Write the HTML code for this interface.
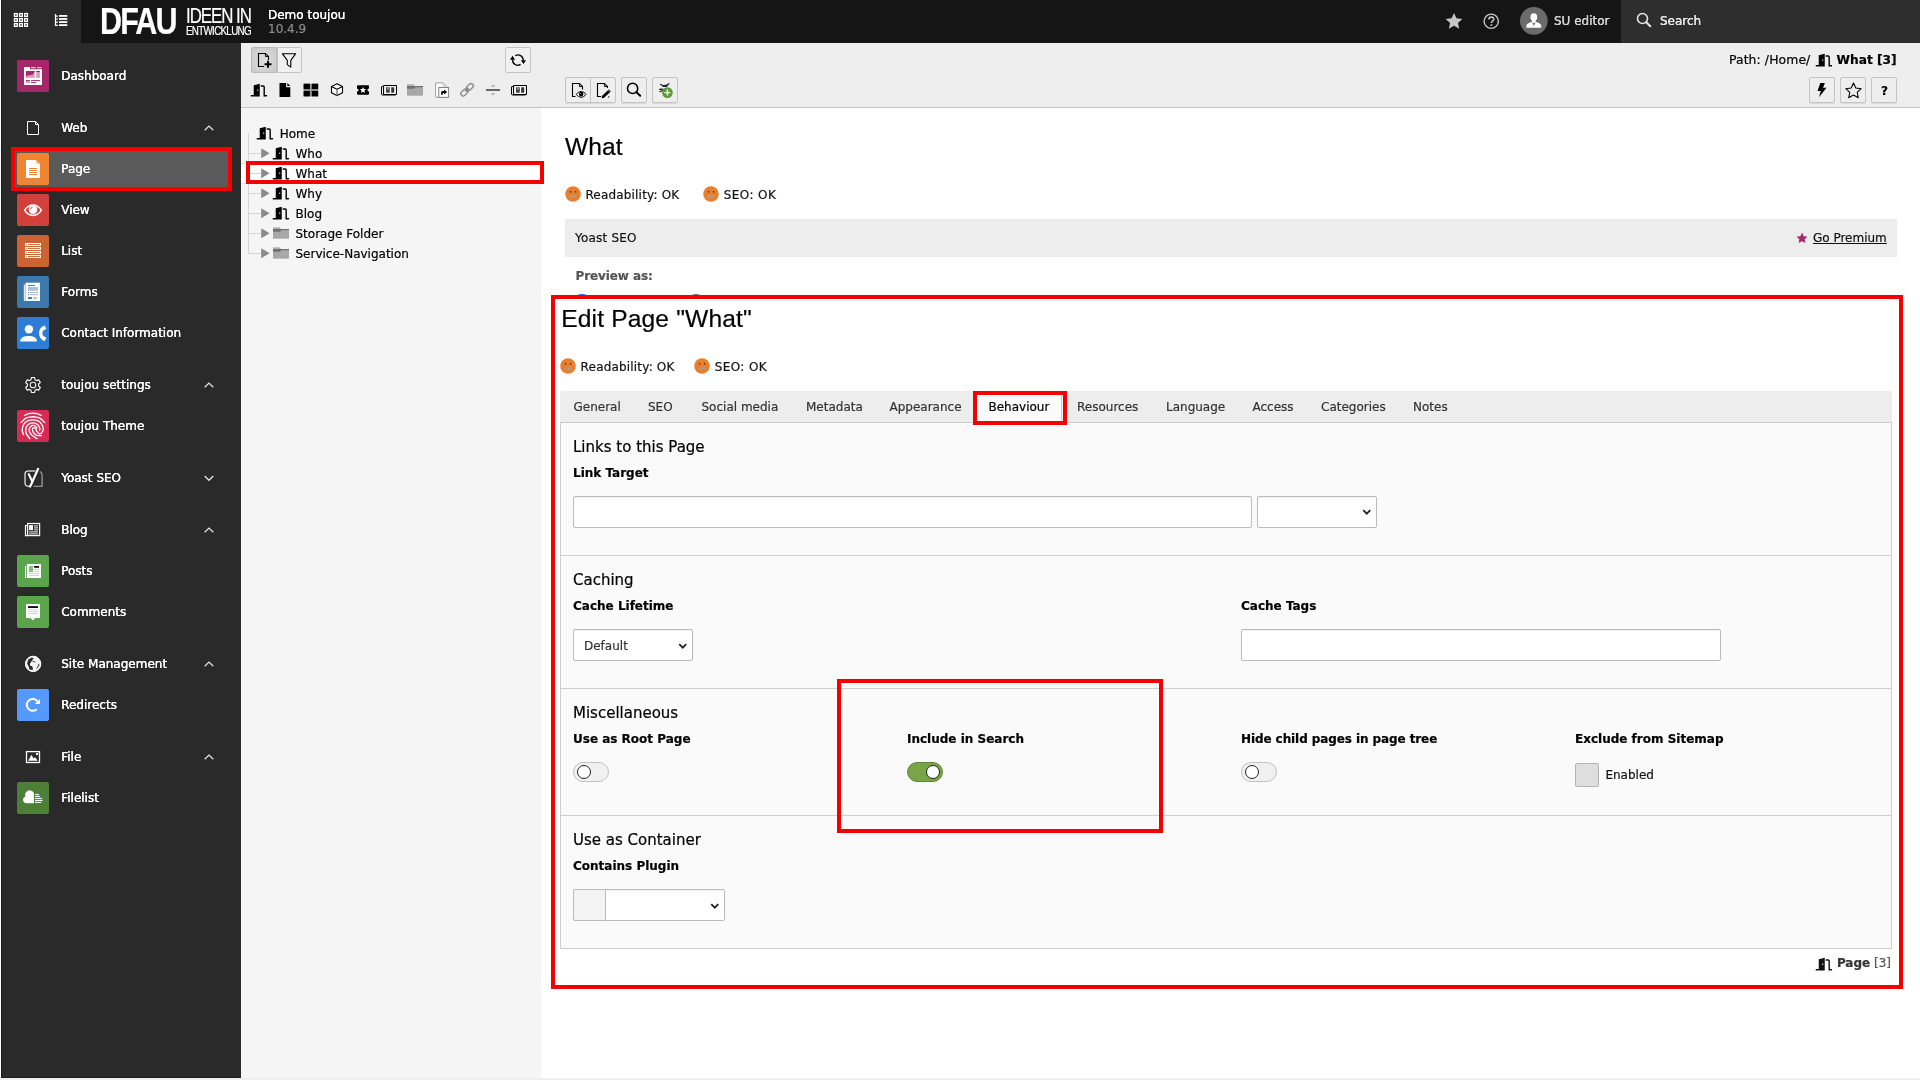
<!DOCTYPE html>
<html lang="en">
<head>
<meta charset="utf-8">
<title>Demo toujou [TYPO3 CMS 10.4.9]</title>
<style>
*{box-sizing:border-box;margin:0;padding:0}
html,body{width:1920px;height:1080px;overflow:hidden;background:#fff}
body{font-family:"DejaVu Sans","Liberation Sans",sans-serif;font-size:12px;color:#000;position:relative}
.t{position:absolute;white-space:nowrap;-webkit-text-stroke:.2px currentColor}
#root{position:absolute;left:0;top:0;width:1920px;height:1080px;will-change:transform}
svg{position:absolute;display:block;overflow:visible}
.mi{position:absolute;width:32px;height:32px;border-radius:2px}
.btn{position:absolute;border:1px solid #c4c4c4;background:#f3f3f3;border-radius:2px}
.red{position:absolute;border:4px solid #f40000}
.inp{position:absolute;border:1px solid #bbb;background:#fff;border-radius:2px;box-shadow:inset 0 1px 1px rgba(0,0,0,.06)}
.sep{position:absolute;left:560px;width:1331px;height:1px;background:#cfcfcf}
</style>
</head>
<body>
<div id="root">

<div style="position:absolute;left:0.00px;top:0.00px;width:1920.00px;height:1080.00px;background:#fff"></div>
<div style="position:absolute;left:1.00px;top:0.00px;width:1919.00px;height:42.60px;background:#151515"></div>
<div style="position:absolute;left:1.00px;top:0.00px;width:80.00px;height:42.60px;background:#2a2a2a"></div>
<div style="position:absolute;left:1620.60px;top:0.00px;width:299.40px;height:42.60px;background:#2e2e2e"></div>
<div style="position:absolute;left:1.00px;top:42.60px;width:240.00px;height:1035.20px;background:#2a2a2a"></div>
<div style="position:absolute;left:1.00px;top:0.00px;width:0.80px;height:1078.00px;background:#1c1c1c"></div>
<div style="position:absolute;left:1.00px;top:1077.00px;width:240.00px;height:1.00px;background:#1c1c1c"></div>
<div style="position:absolute;left:241.00px;top:42.60px;width:300.00px;height:1035.20px;background:#f5f5f5"></div>
<div style="position:absolute;left:241.00px;top:42.60px;width:300.00px;height:65.00px;background:#eee;border-bottom:1px solid #c3c3c3"></div>
<div style="position:absolute;left:541.00px;top:42.60px;width:1379.00px;height:1035.20px;background:#fff"></div>
<div style="position:absolute;left:541.00px;top:42.60px;width:1379.00px;height:65.00px;background:#eee;border-bottom:1px solid #c3c3c3"></div>
<div style="position:absolute;left:0.00px;top:1077.80px;width:1920.00px;height:2.20px;background:#efefef"></div>
<svg style="left:13.00px;top:13.00px" width="16" height="16" viewBox="0 0 16 16" ><rect x="1.50" y="0.60" width="2.700" height="2.700" fill="#000" stroke="#fff" stroke-width="1.400"/><rect x="6.60" y="0.60" width="2.700" height="2.700" fill="#000" stroke="#fff" stroke-width="1.400"/><rect x="11.70" y="0.60" width="2.700" height="2.700" fill="#000" stroke="#fff" stroke-width="1.400"/><rect x="1.50" y="5.60" width="2.700" height="2.700" fill="#000" stroke="#fff" stroke-width="1.400"/><rect x="6.60" y="5.60" width="2.700" height="2.700" fill="#000" stroke="#fff" stroke-width="1.400"/><rect x="11.70" y="5.60" width="2.700" height="2.700" fill="#000" stroke="#fff" stroke-width="1.400"/><rect x="1.50" y="10.60" width="2.700" height="2.700" fill="#000" stroke="#fff" stroke-width="1.400"/><rect x="6.60" y="10.60" width="2.700" height="2.700" fill="#000" stroke="#fff" stroke-width="1.400"/><rect x="11.70" y="10.60" width="2.700" height="2.700" fill="#000" stroke="#fff" stroke-width="1.400"/></svg>
<svg style="left:53.00px;top:13.00px" width="16" height="16" viewBox="0 0 16 16" ><path fill="none" stroke="#fff" stroke-width="1.200" d="M2.500 .9v12M2.500 3.100h2.400M2.500 6h2.400M2.500 9.100h2.400M2.500 12.300h2.400"/><rect x="6" y="2.00" width="8.300" height="1.800" fill="#fff"/><rect x="6" y="5.07" width="8.300" height="1.800" fill="#fff"/><rect x="6" y="8.14" width="8.300" height="1.800" fill="#fff"/><rect x="6" y="11.21" width="8.300" height="1.800" fill="#fff"/></svg>
<div class="t" style="left:100.00px;top:-5.50px;font-size:37.4px;line-height:53px;color:#fff;font-family:'Liberation Sans','DejaVu Sans',sans-serif;font-weight:bold;letter-spacing:-2.3px;transform:scaleX(.816);transform-origin:0 0;">DFAU</div>
<div class="t" style="left:186.00px;top:1.00px;font-size:21.4px;line-height:30px;color:#fff;font-family:'Liberation Sans','DejaVu Sans',sans-serif;letter-spacing:-1.3px;transform:scaleX(.788);transform-origin:0 0;">IDEEN IN</div>
<div class="t" style="left:186.00px;top:22.50px;font-size:11.9px;line-height:17px;color:#fff;font-family:'Liberation Sans','DejaVu Sans',sans-serif;letter-spacing:-.85px;transform:scaleX(.826);transform-origin:0 0;">ENTWICKLUNG</div>
<div class="t" style="left:268.00px;top:6.50px;font-size:12px;line-height:17px;color:#fff;text-shadow:0 0 .4px #fff;">Demo toujou</div>
<div class="t" style="left:268.00px;top:20.50px;font-size:12px;line-height:17px;color:#8c8c8c;">10.4.9</div>
<svg style="left:1444.90px;top:12.10px" width="18.05" height="18.05" viewBox="0 0 16 16" ><path fill="#c4c4c4" d="M8 .8l2.200 4.800 5.200.6-3.900 3.500 1.100 5.100L8 12.200l-4.600 2.600 1.100-5.100L.6 6.200l5.200-.6z"/></svg>
<svg style="left:1482.50px;top:12.50px" width="16.5" height="16.5" viewBox="0 0 16 16" ><circle cx="8" cy="8" r="6.900" fill="none" stroke="#c4c4c4" stroke-width="1.400"/><path fill="none" stroke="#c4c4c4" stroke-width="1.500" d="M5.700 6.300c0-1.400 1-2.300 2.400-2.300s2.300.9 2.300 2.100c0 1.700-2.300 1.700-2.300 3.700"/><rect x="7.300" y="10.900" width="1.600" height="1.600" fill="#c4c4c4"/></svg>
<svg style="left:1520.00px;top:7.30px" width="27.7" height="27.7" viewBox="0 0 28 28" ><circle cx="14" cy="14" r="14" fill="#6b6b6b"/><path fill="#fff" d="M14 6.200c2.300 0 3.400 1.700 3.400 3.900 0 1.600-.6 3-1.500 3.800v1.300c2.900.7 5.600 1.600 5.600 4.400v1.400h-15v-1.400c0-2.800 2.700-3.700 5.600-4.400v-1.300c-.9-.8-1.500-2.200-1.500-3.800 0-2.200 1.100-3.900 3.400-3.900z"/><path fill="#6b6b6b" d="M12.300 15.600l1.700 3.600 1.700-3.600-1.700.6z"/></svg>
<div class="t" style="left:1554.00px;top:12.50px;font-size:12px;line-height:17px;color:#d4d4d4;text-shadow:0 0 .5px #d4d4d4;">SU editor</div>
<svg style="left:1635.90px;top:12.00px" width="16" height="16" viewBox="0 0 16 16" ><circle cx="6.500" cy="6.500" r="5" fill="none" stroke="#e6e6e6" stroke-width="1.600"/><path stroke="#e6e6e6" stroke-width="2" stroke-linecap="round" d="M10.300 10.300l4 4"/></svg>
<div class="t" style="left:1660.00px;top:12.50px;font-size:12px;line-height:17px;color:#e8e8e8;text-shadow:0 0 .5px #e8e8e8;">Search</div>
<div style="position:absolute;left:15.00px;top:151.00px;width:213.00px;height:36.00px;background:#5a5a5a"></div>
<div class="red" style="left:11px;top:147px;width:221px;height:44px"></div>
<div class="mi" style="left:17px;top:60px;background:#a4276a"><svg style="left:0.00px;top:0.00px" width="32" height="32" viewBox="0 0 32 32" ><path fill="#fff" d="M7 7h6v2.2h12V25H7z"/><rect x="14" y="7.2" width="4.6" height="1" fill="#fff"/><rect x="20" y="7.2" width="4.7" height="1" fill="#fff" opacity=".85"/><rect x="9" y="11" width="8.7" height="6.9" fill="#a4276a" opacity=".45"/><path fill="#a4276a" d="M9 11h8.7v.6l-2.2 3.4-1-.6-1.3 1.200-1.400-.9-1.500 1.100-1.300.900z"/><rect x="19.200" y="11" width="3.700" height="6.900" fill="#a4276a" opacity=".45"/><rect x="19.200" y="11" width="3.700" height="1" fill="#a4276a"/><rect x="9" y="20" width="3.700" height="2.900" fill="#a4276a" opacity=".5"/><rect x="9" y="20" width="3.700" height=".9" fill="#a4276a"/><rect x="14" y="20.100" width="9" height="1" fill="#a4276a"/><rect x="14" y="22.100" width="5" height="1" fill="#a4276a"/></svg></div>
<div class="t" style="left:61.20px;top:67.50px;font-size:12px;line-height:17px;color:#fff;text-shadow:0 0 .5px #fff;">Dashboard</div>
<div class="mi" style="left:17px;top:153px;background:#ee8535"><svg style="left:0.00px;top:0.00px" width="32" height="32" viewBox="0 0 32 32" ><path fill="#fff" d="M9 7h10l4 4v14H9z"/><path fill="#ee8535" opacity=".45" d="M19 7l4 4h-4z"/><rect x="12" y="15" width="8" height="1" fill="#ee8535"/><rect x="12" y="17" width="8" height="1" fill="#ee8535"/><rect x="12" y="19" width="8" height="1" fill="#ee8535"/><rect x="12" y="21" width="8" height="1" fill="#ee8535"/></svg></div>
<div class="t" style="left:61.20px;top:160.50px;font-size:12px;line-height:17px;color:#fff;text-shadow:0 0 .5px #fff;">Page</div>
<div class="mi" style="left:17px;top:194px;background:#d2403b"><svg style="left:0.00px;top:0.00px" width="32" height="32" viewBox="0 0 32 32" ><path fill="none" stroke="#fff" stroke-width="1.5" d="M7.600 16.200C10 12.400 13 10.900 16 10.900s6 1.500 8.400 5.300C22 20 19 21.400 16 21.400S10 20 7.600 16.200z"/><circle cx="16" cy="15.600" r="4.300" fill="#fff"/><path fill="none" stroke="#d2403b" stroke-width=".9" d="M13.700 15.200a2.300 2.300 0 0 1 2-2.200"/></svg></div>
<div class="t" style="left:61.20px;top:201.50px;font-size:12px;line-height:17px;color:#fff;text-shadow:0 0 .5px #fff;">View</div>
<div class="mi" style="left:17px;top:235px;background:#cb6432"><svg style="left:0.00px;top:0.00px" width="32" height="32" viewBox="0 0 32 32" ><rect x="8" y="8" width="16" height="2.900" rx=".3" fill="#fff"/><rect x="9" y="9" width="14" height=".9" fill="#cb6432"/><rect x="9.800" y="9" width="1.200" height=".9" fill="#fff"/><rect x="8" y="12" width="16" height="2.900" rx=".3" fill="#fff"/><rect x="9" y="13" width="14" height=".9" fill="#cb6432"/><rect x="9.800" y="13" width="1.200" height=".9" fill="#fff"/><rect x="8" y="16" width="16" height="2.900" rx=".3" fill="#fff"/><rect x="9" y="17" width="14" height=".9" fill="#cb6432"/><rect x="9.800" y="17" width="1.200" height=".9" fill="#fff"/><rect x="8" y="20" width="16" height="2.900" rx=".3" fill="#fff"/><rect x="9" y="21" width="14" height=".9" fill="#cb6432"/><rect x="9.800" y="21" width="1.200" height=".9" fill="#fff"/></svg></div>
<div class="t" style="left:61.20px;top:242.50px;font-size:12px;line-height:17px;color:#fff;text-shadow:0 0 .5px #fff;">List</div>
<div class="mi" style="left:17px;top:276px;background:#3c78ab"><svg style="left:0.00px;top:0.00px" width="32" height="32" viewBox="0 0 32 32" ><path fill="#fff" opacity=".85" d="M6.800 8.700h2v16.300h-2z"/><rect x="8.400" y="6.700" width="14.600" height="18.300" fill="#fff"/><path stroke="#3c78ab" stroke-width=".5" opacity=".6" d="M8.500 8.700v16.300"/><rect x="11" y="9.100" width="7" height="1" fill="#3c78ab"/><rect x="11" y="11.100" width="10" height="3.700" fill="#3c78ab" opacity=".45"/><rect x="11" y="16" width="1.100" height="1" fill="#3c78ab"/><rect x="13" y="16" width="8" height="1" fill="#3c78ab" opacity=".5"/><rect x="11" y="18.200" width="1.100" height="1" fill="#3c78ab"/><rect x="13" y="18.200" width="8" height="1" fill="#3c78ab" opacity=".5"/><rect x="11" y="21.100" width="4" height="1.900" fill="#3c78ab"/><rect x="16.200" y="21.100" width="3.800" height="1.900" fill="#3c78ab" opacity=".45"/></svg></div>
<div class="t" style="left:61.20px;top:283.50px;font-size:12px;line-height:17px;color:#fff;text-shadow:0 0 .5px #fff;">Forms</div>
<div class="mi" style="left:17px;top:317px;background:#2d7dd7"><svg style="left:0.00px;top:0.00px" width="32" height="32" viewBox="0 0 32 32" ><circle cx="11.900" cy="12.300" r="4.200" fill="#fff"/><path fill="#fff" d="M3.200 24.600c0-3.800 3.600-5.600 8.400-5.600s8.400 1.800 8.400 5.600z"/><path fill="#fff" d="M27.800 8.400L29.300 12l-2.700 1.200c-1.700 1.800-1.700 4.200 0 6l2.700 1.200L27.800 24c-3.300-.7-5.700-4-5.700-7.800s2.400-7.100 5.700-7.800z"/></svg></div>
<div class="t" style="left:61.20px;top:324.50px;font-size:12px;line-height:17px;color:#fff;text-shadow:0 0 .5px #fff;">Contact Information</div>
<div class="mi" style="left:17px;top:410px;background:#d62b55"><svg style="left:0.00px;top:0.00px" width="32" height="32" viewBox="0 0 32 32" ><g fill="none" stroke="#fff" stroke-width="1.350" stroke-linecap="round" stroke-linejoin="round"><path d="M7.80 5.40C8.42 5.12 10.15 4.07 11.50 3.70C12.85 3.33 14.43 3.20 15.90 3.20C17.37 3.20 18.93 3.33 20.30 3.70C21.67 4.07 23.47 5.12 24.10 5.40"/><path d="M4.10 12.50C4.92 11.78 7.03 9.17 9.00 8.20C10.97 7.23 13.60 6.70 15.90 6.70C18.20 6.70 20.85 7.23 22.80 8.20C24.75 9.17 26.80 11.78 27.60 12.50"/><path d="M6.50 24.70C6.28 23.87 5.12 21.52 5.20 19.70C5.28 17.88 6.07 15.27 7.00 13.80C7.93 12.33 9.32 11.55 10.80 10.90C12.28 10.25 14.20 9.90 15.90 9.90C17.60 9.90 19.63 10.32 21.00 10.90C22.37 11.48 23.22 12.05 24.10 13.40C24.98 14.75 26.25 17.40 26.30 19.00C26.35 20.60 25.13 22.23 24.40 23.00C23.67 23.77 22.70 23.90 21.90 23.60C21.10 23.30 20.10 21.97 19.60 21.20C19.10 20.43 19.23 19.55 18.90 19.00C18.57 18.45 18.10 18.08 17.60 17.90C17.10 17.72 16.27 17.60 15.90 17.90C15.53 18.20 15.27 18.85 15.40 19.70C15.53 20.55 16.00 22.07 16.70 23.00C17.40 23.93 18.32 24.87 19.60 25.30C20.88 25.73 23.60 25.55 24.40 25.60"/><path d="M12.80 28.60C12.27 27.85 10.28 25.58 9.60 24.10C8.92 22.62 8.52 21.23 8.70 19.70C8.88 18.17 9.50 16.03 10.70 14.90C11.90 13.77 14.17 12.90 15.90 12.90C17.63 12.90 19.92 13.88 21.10 14.90C22.28 15.92 22.78 18.12 23.00 19.00C23.22 19.88 22.50 20.00 22.40 20.20"/><path d="M20.00 28.60C19.20 28.10 16.43 26.72 15.20 25.60C13.97 24.48 13.10 23.00 12.60 21.90C12.10 20.80 12.02 19.92 12.20 19.00C12.38 18.08 13.08 17.00 13.70 16.40C14.32 15.80 15.13 15.47 15.90 15.40C16.67 15.33 17.63 15.57 18.30 16.00C18.97 16.43 19.63 17.67 19.90 18.00"/></g></svg></div>
<div class="t" style="left:61.20px;top:417.50px;font-size:12px;line-height:17px;color:#fff;text-shadow:0 0 .5px #fff;">toujou Theme</div>
<div class="mi" style="left:17px;top:555px;background:#5aa44c"><svg style="left:0.00px;top:0.00px" width="32" height="32" viewBox="0 0 32 32" ><rect x="8" y="11.200" width="1.100" height="11.800" fill="#fff"/><rect x="9.900" y="9" width="14.100" height="14" fill="#fff"/><rect x="12" y="11" width="4" height="6" fill="#5aa44c" opacity=".7"/><rect x="17.100" y="11" width="4.900" height="1.800" fill="#111"/><rect x="17.100" y="14" width="4.900" height=".8" fill="#c8c8c8"/><rect x="17.100" y="16" width="4.900" height=".8" fill="#c8c8c8"/><rect x="12" y="18.100" width="10" height=".8" fill="#c8c8c8"/><rect x="12" y="20.100" width="10" height=".8" fill="#c8c8c8"/></svg></div>
<div class="t" style="left:61.20px;top:562.50px;font-size:12px;line-height:17px;color:#fff;text-shadow:0 0 .5px #fff;">Posts</div>
<div class="mi" style="left:17px;top:596px;background:#5aa44c"><svg style="left:0.00px;top:0.00px" width="32" height="32" viewBox="0 0 32 32" ><path fill="#fff" d="M9 8h14v14h-4.900l-2.250 2.600L13.600 22H9z"/><rect x="11" y="10.100" width="10" height="1.900" fill="#111"/><rect x="11" y="13.300" width="10" height=".8" fill="#c8c8c8"/><rect x="11" y="15.300" width="10" height=".8" fill="#c8c8c8"/><rect x="11" y="17.300" width="10" height=".8" fill="#c8c8c8"/></svg></div>
<div class="t" style="left:61.20px;top:603.50px;font-size:12px;line-height:17px;color:#fff;text-shadow:0 0 .5px #fff;">Comments</div>
<div class="mi" style="left:17px;top:689px;background:#5599fe"><svg style="left:0.00px;top:0.00px" width="32" height="32" viewBox="0 0 32 32" ><path fill="none" stroke="#fff" stroke-width="2" d="M20.400 12.300A5.900 5.900 0 1 0 19.900 20.100"/><path fill="#fff" d="M23 9.900v5h-5.200z"/></svg></div>
<div class="t" style="left:61.20px;top:696.50px;font-size:12px;line-height:17px;color:#fff;text-shadow:0 0 .5px #fff;">Redirects</div>
<div class="mi" style="left:17px;top:782px;background:#4c8038"><svg style="left:0.00px;top:0.00px" width="32" height="32" viewBox="0 0 32 32" ><path fill="#fff" d="M17 21.200H9.300a3.300 3.300 0 0 1-.9-6.450 4.600 4.600 0 0 1 8.600-3.500z"/><rect x="18" y="11.95" width="4.00" height="1.100" fill="#fff"/><rect x="18" y="13.90" width="5.00" height="1.100" fill="#fff"/><rect x="18" y="15.90" width="7.00" height="1.100" fill="#fff"/><rect x="18" y="17.90" width="7.70" height="1.100" fill="#fff"/><rect x="18" y="19.85" width="6.30" height="1.100" fill="#fff"/></svg></div>
<div class="t" style="left:61.20px;top:789.50px;font-size:12px;line-height:17px;color:#fff;text-shadow:0 0 .5px #fff;">Filelist</div>
<svg style="left:25.00px;top:120.00px" width="16" height="16" viewBox="0 0 16 16" ><path fill="none" stroke="#fff" stroke-width="1" d="M2.500 1.500h8l3 3v10h-11z"/><path fill="none" stroke="#fff" stroke-width="1" d="M10.500 1.500v3h3"/></svg>
<div class="t" style="left:61.20px;top:119.50px;font-size:12px;line-height:17px;color:#fff;text-shadow:0 0 .5px #fff;">Web</div>
<svg style="left:204.00px;top:125.40px" width="10" height="6.3" viewBox="0 0 10 6.3" ><path fill="none" stroke="#e8e8e8" stroke-width="1.200" d="M.7 5.300L5 1l4.300 4.300"/></svg>
<svg style="left:25.00px;top:377.00px" width="16" height="16" viewBox="0 0 16 16" ><path fill="none" stroke="#fff" stroke-width="1.100" stroke-linejoin="round" d="M6.39 0.47L9.61 0.47L9.95 2.65L11.66 3.63L13.72 2.84L15.32 5.62L13.61 7.02L13.61 8.98L15.32 10.38L13.72 13.16L11.66 12.37L9.95 13.35L9.61 15.53L6.39 15.53L6.05 13.35L4.34 12.37L2.28 13.16L0.68 10.38L2.39 8.98L2.39 7.02L0.68 5.62L2.28 2.84L4.34 3.63L6.05 2.65z"/><circle cx="8" cy="8" r="2.800" fill="none" stroke="#eee" stroke-width="1.100"/></svg>
<div class="t" style="left:61.20px;top:376.50px;font-size:12px;line-height:17px;color:#fff;text-shadow:0 0 .5px #fff;">toujou settings</div>
<svg style="left:204.00px;top:382.40px" width="10" height="6.3" viewBox="0 0 10 6.3" ><path fill="none" stroke="#e8e8e8" stroke-width="1.200" d="M.7 5.300L5 1l4.300 4.300"/></svg>
<svg style="left:25.00px;top:470.00px" width="18" height="18" viewBox="0 0 18 18" ><path fill="none" stroke="#fff" stroke-width="1.100" d="M10.500 1H3a3 3 0 0 0-3 3v9.200a3 3 0 0 0 3 3h1.500"/><path fill="none" stroke="#b0b0b0" stroke-width="1.100" d="M3.500 1H10M14.800 1.400c1.400.5 2.300 1.800 2.300 3.400v11.400H8.500"/><path fill="none" stroke="#fff" stroke-width="2.100" d="M3.400 3.400l4.200 8.800"/><path fill="none" stroke="#fff" stroke-width="2.300" d="M13.400-1.900L7.300 11.900c-.8 1.900-1.500 3.700-2.900 5.500"/></svg>
<div class="t" style="left:61.20px;top:469.50px;font-size:12px;line-height:17px;color:#fff;text-shadow:0 0 .5px #fff;">Yoast SEO</div>
<svg style="left:204.00px;top:475.40px" width="10" height="6.3" viewBox="0 0 10 6.3" ><path fill="none" stroke="#e8e8e8" stroke-width="1.200" d="M.7 1L5 5.300 9.300 1"/></svg>
<svg style="left:25.00px;top:522.00px" width="16" height="16" viewBox="0 0 16 16" ><rect x="2.600" y="1.500" width="12" height="12.100" fill="none" stroke="#fff" stroke-width="1.200"/><path fill="none" stroke="#fff" stroke-width="1.200" d="M2.600 3.500H.5v10.100h2.100"/><rect x="4.100" y="3.100" width="3.900" height="5" fill="#fff"/><path stroke="#fff" stroke-width=".95" d="M9 3.900h4M9 5.900h4M9 7.900h4M4.100 9.900h8.900M4.100 11.900h8.900"/></svg>
<div class="t" style="left:61.20px;top:521.50px;font-size:12px;line-height:17px;color:#fff;text-shadow:0 0 .5px #fff;">Blog</div>
<svg style="left:204.00px;top:527.40px" width="10" height="6.3" viewBox="0 0 10 6.3" ><path fill="none" stroke="#e8e8e8" stroke-width="1.200" d="M.7 5.300L5 1l4.300 4.300"/></svg>
<svg style="left:25.00px;top:656.00px" width="16" height="16" viewBox="0 0 16 16" ><circle cx="8.100" cy="7.900" r="7.700" fill="#f4f4f4" stroke="#fff" stroke-width="1"/><path fill="#2a2a2a" d="M6.800 1.400L3.300 3.400 2.100 7.600l1.800 3.500.5 2.400 3.600.6-.6-3.500L5 9.400V7.600l1.800-2.700 1.800-2.600z"/><path fill="#2a2a2a" d="M13.900 7.600L11 13.500l1.700-1.800 1.800-2.900z"/><path stroke="#2a2a2a" stroke-width=".8" d="M7.400 5.200l3 .9"/></svg>
<div class="t" style="left:61.20px;top:655.50px;font-size:12px;line-height:17px;color:#fff;text-shadow:0 0 .5px #fff;">Site Management</div>
<svg style="left:204.00px;top:661.40px" width="10" height="6.3" viewBox="0 0 10 6.3" ><path fill="none" stroke="#e8e8e8" stroke-width="1.200" d="M.7 5.300L5 1l4.300 4.300"/></svg>
<svg style="left:25.00px;top:749.00px" width="16" height="16" viewBox="0 0 16 16" ><rect x="1.500" y="2.600" width="13" height="10.900" fill="none" stroke="#fff" stroke-width="1.300"/><path fill="#fff" d="M3.100 11.700L6.500 5.800l2.100 3.600 1.500-1.200 2.600 3.500z"/><rect x="11" y="4" width="2.100" height="2.100" rx=".5" fill="#fff"/></svg>
<div class="t" style="left:61.20px;top:748.50px;font-size:12px;line-height:17px;color:#fff;text-shadow:0 0 .5px #fff;">File</div>
<svg style="left:204.00px;top:754.40px" width="10" height="6.3" viewBox="0 0 10 6.3" ><path fill="none" stroke="#e8e8e8" stroke-width="1.200" d="M.7 5.300L5 1l4.300 4.300"/></svg>
<div class="btn" style="left:251.3px;top:47.200px;width:25.300px;height:25.600px;border-color:#b9b9b9;border-radius:2px 0 0 2px;background:radial-gradient(ellipse at center,#dedede 0%,#c9c9c9 100%)"></div>
<div class="btn" style="left:276.600px;top:47.200px;width:25.200px;height:25.600px;border-radius:0 2px 2px 0;background:#f0f0f0"></div>
<svg style="left:256.20px;top:52.00px" width="16" height="16" viewBox="0 0 16 16" ><path fill="none" stroke="#000" stroke-width="1.100" d="M8 14.450H2.500v-13h6.900l3.100 3.100V8"/><path fill="none" stroke="#000" stroke-width=".9" d="M9.400 1.450v3.100h3.100"/><path stroke="#000" stroke-width="2" d="M8.500 12.200h7M12 8.700v7"/></svg>
<svg style="left:281.20px;top:52.00px" width="16" height="16" viewBox="0 0 16 16" ><path fill="none" stroke="#000" stroke-width="1.100" stroke-linejoin="round" d="M1.300 1.700h13.400L9.800 8.300v6.800L6.300 12.600V8.300z"/></svg>
<div class="btn" style="left:505.300px;top:47.200px;width:25.700px;height:25.600px;background:#f0f0f0"></div>
<svg style="left:510.20px;top:52.30px" width="16" height="16" viewBox="0 0 16 16" ><path fill="none" stroke="#000" stroke-width="1.300" d="M5.300 3.700A5.200 5.200 0 0 1 13.200 8.300M10.600 12.400A5.200 5.200 0 0 1 2.600 7.700"/><path fill="#000" d="M10.900 8.200h5.100l-2.500 3.900zM0 7.700h5.100L2.500 3.800z"/></svg>
<svg style="left:251.00px;top:82.00px" width="16" height="16" viewBox="0 0 16 16" ><path fill="#000" fill-rule="evenodd" d="M2.750 3.300L8.750 1.700V14.500H.3a.7.700 0 0 1 0-1.500h2.450zM6.300 7.400v1.700h.9V7.400z"/><path fill="none" stroke="#000" stroke-width="1.400" stroke-linecap="round" d="M10.200 4h2a1 1 0 0 1 1 1v8.750h2.300"/></svg>
<svg style="left:277.00px;top:82.00px" width="16" height="16" viewBox="0 0 16 16" ><path fill="#000" d="M2.500 1h6.600v4.300h4.200V15H2.500z"/><path fill="#000" d="M10.300 1l3 3.100h-3z"/></svg>
<svg style="left:302.10px;top:82.00px" width="16" height="16" viewBox="0 0 16 16" ><rect x="1.600" y="1.700" width="14.600" height="12.700" fill="#999"/><rect x="1.600" y="1.700" width="6.300" height="5.400" fill="#000"/><rect x="9.800" y="1.700" width="6.400" height="5.400" fill="#000"/><rect x="1.600" y="8.900" width="6.300" height="5.500" fill="#000"/><rect x="9.800" y="8.900" width="6.400" height="5.500" fill="#000"/></svg>
<svg style="left:329.00px;top:82.00px" width="16" height="16" viewBox="0 0 16 16" ><path fill="#fff" stroke="#000" stroke-width="1.100" stroke-linejoin="round" d="M8 1.700l5.500 2.800v6.300L8 13.600l-5.500-2.800V4.500z"/><path fill="none" stroke="#000" stroke-width="1.100" stroke-linejoin="round" d="M2.500 4.500L8 7.300l5.500-2.800"/><path stroke="#777" stroke-width="1.400" d="M8 7.300v6.300"/></svg>
<svg style="left:355.00px;top:82.00px" width="16" height="16" viewBox="0 0 16 16" ><path fill="#000" d="M3 3.200h10a1 1 0 0 1 1 1v2.200a1.600 1.600 0 0 0 0 3.200v2.200a1 1 0 0 1-1 1H3a1 1 0 0 1-1-1V9.600a1.600 1.600 0 0 0 0-3.200V4.200a1 1 0 0 1 1-1z"/><path fill="#fff" d="M8 4.900l.95 2.050 2.150.25-1.600 1.500.45 2.200L8 9.800l-1.950 1.100.45-2.200-1.600-1.500 2.150-.25z"/></svg>
<svg style="left:381.00px;top:82.00px" width="16" height="16" viewBox="0 0 16 16" ><path fill="#ddd" stroke="#000" stroke-width="1" d="M2.500 3.500h13v9h-13z"/><path fill="none" stroke="#000" stroke-width="1" d="M2.500 4.500h-1.500a.5.500 0 0 0-.5.500v7a1 1 0 0 0 1 1h13"/><rect x="3.800" y="4.500" width="10.700" height="7" fill="#fff"/><rect x="5" y="5.300" width="3.800" height="5.400" fill="#444"/><rect x="5.900" y="5.800" width="2" height="1.800" fill="#999"/><rect x="10.200" y="5.300" width="3" height="5.400" fill="#333"/></svg>
<svg style="left:407.00px;top:82.00px" width="16" height="16" viewBox="0 0 16 16" ><path fill="#a8a8a8" d="M0 4h16v9.700H0z"/><path fill="#b4b4b4" d="M0 2.200h7l.7 1.800H0z"/><path fill="#707070" d="M0 4h16v1.200H8.200L7.200 6.800H0z"/></svg>
<svg style="left:433.00px;top:82.00px" width="16" height="16" viewBox="0 0 16 16" ><path fill="#fff" stroke="#999" stroke-width=".9" d="M2.600.9h7.400l3.300 3.300v11H2.600z"/><path fill="#e5e5e5" stroke="#bbb" stroke-width=".6" d="M10 .9v3.300h3.300z"/><rect x="5.800" y="5.500" width="9.800" height="9.800" fill="#fff" stroke="#777" stroke-width=".9"/><path fill="#000" d="M8.100 12.700v-2.100c0-.9.600-1.500 1.500-1.500h1.500V7.600l3 2.500-3 2.500v-1.500H9.800v1.600z"/></svg>
<svg style="left:459.00px;top:82.00px" width="16" height="16" viewBox="0 0 16 16" ><g transform="translate(8.100 7.800) rotate(-45) scale(.9)" fill="none" stroke="#8c8c8c" stroke-width="1.500"><rect x="-8.700" y="-2.600" width="8.700" height="5.200" rx="2.600"/><rect x="0" y="-2.600" width="8.700" height="5.200" rx="2.600"/><path stroke-width="2.800" d="M-2.600 0h5.200"/></g></svg>
<svg style="left:485.00px;top:82.00px" width="16" height="16" viewBox="0 0 16 16" ><rect x="1" y="7" width="14" height="2" fill="#666"/><path fill="#aaa" d="M8 2.400l2.300 2.400H5.700zM8 13.600l2.300-2.400H5.700z"/></svg>
<svg style="left:511.00px;top:82.00px" width="16" height="16" viewBox="0 0 16 16" ><path fill="#ddd" stroke="#000" stroke-width="1" d="M2.500 3.500h13v9h-13z"/><path fill="none" stroke="#000" stroke-width="1" d="M2.500 4.500h-1.500a.5.500 0 0 0-.5.500v7a1 1 0 0 0 1 1h13"/><rect x="3.800" y="4.500" width="10.700" height="7" fill="#fff"/><rect x="5" y="5.300" width="3.800" height="5.400" fill="#444"/><rect x="5.900" y="5.800" width="2" height="1.800" fill="#999"/><rect x="10.200" y="5.300" width="3" height="5.400" fill="#333"/></svg>
<div style="position:absolute;left:248.20px;top:133.00px;width:1.00px;height:120.50px;background:#d4d4d4"></div>
<div style="position:absolute;left:241.00px;top:163.00px;width:300.00px;height:20.00px;background:#fff"></div>
<div style="position:absolute;left:241.00px;top:162.50px;width:5.00px;height:1.00px;background:#e4e4e4"></div>
<div style="position:absolute;left:241.00px;top:183.00px;width:5.00px;height:1.00px;background:#e4e4e4"></div>
<svg style="left:257.00px;top:125.00px" width="16" height="16" viewBox="0 0 16 16" ><path fill="#000" fill-rule="evenodd" d="M2.750 3.300L8.750 1.700V14.500H.3a.7.700 0 0 1 0-1.500h2.450zM6.300 7.400v1.700h.9V7.400z"/><path fill="none" stroke="#000" stroke-width="1.400" stroke-linecap="round" d="M10.200 4h2a1 1 0 0 1 1 1v8.750h2.300"/></svg>
<div class="t" style="left:279.70px;top:125.50px;font-size:12px;line-height:17px;color:#000;">Home</div>
<div style="position:absolute;left:248.20px;top:152.80px;width:13.00px;height:1.00px;background:#d4d4d4"></div>
<svg style="left:261.00px;top:148.10px" width="9" height="10.4" viewBox="0 0 9 10.4" ><path fill="#8a8a8a" d="M.2.200L8.600 5.200.2 10.200z"/></svg>
<svg style="left:273.00px;top:145.00px" width="16" height="16" viewBox="0 0 16 16" ><path fill="#000" fill-rule="evenodd" d="M2.750 3.300L8.750 1.700V14.500H.3a.7.700 0 0 1 0-1.500h2.450zM6.300 7.400v1.700h.9V7.400z"/><path fill="none" stroke="#000" stroke-width="1.400" stroke-linecap="round" d="M10.200 4h2a1 1 0 0 1 1 1v8.750h2.300"/></svg>
<div class="t" style="left:295.50px;top:145.50px;font-size:12px;line-height:17px;color:#000;">Who</div>
<div style="position:absolute;left:248.20px;top:172.80px;width:13.00px;height:1.00px;background:#d4d4d4"></div>
<svg style="left:261.00px;top:168.10px" width="9" height="10.4" viewBox="0 0 9 10.4" ><path fill="#8a8a8a" d="M.2.200L8.600 5.200.2 10.200z"/></svg>
<svg style="left:273.00px;top:165.00px" width="16" height="16" viewBox="0 0 16 16" ><path fill="#000" fill-rule="evenodd" d="M2.750 3.300L8.750 1.700V14.500H.3a.7.700 0 0 1 0-1.500h2.450zM6.300 7.400v1.700h.9V7.400z"/><path fill="none" stroke="#000" stroke-width="1.400" stroke-linecap="round" d="M10.200 4h2a1 1 0 0 1 1 1v8.750h2.300"/></svg>
<div class="t" style="left:295.50px;top:165.50px;font-size:12px;line-height:17px;color:#000;">What</div>
<div style="position:absolute;left:248.20px;top:192.80px;width:13.00px;height:1.00px;background:#d4d4d4"></div>
<svg style="left:261.00px;top:188.10px" width="9" height="10.4" viewBox="0 0 9 10.4" ><path fill="#8a8a8a" d="M.2.200L8.600 5.200.2 10.200z"/></svg>
<svg style="left:273.00px;top:185.00px" width="16" height="16" viewBox="0 0 16 16" ><path fill="#000" fill-rule="evenodd" d="M2.750 3.300L8.750 1.700V14.500H.3a.7.700 0 0 1 0-1.500h2.450zM6.300 7.400v1.700h.9V7.400z"/><path fill="none" stroke="#000" stroke-width="1.400" stroke-linecap="round" d="M10.200 4h2a1 1 0 0 1 1 1v8.750h2.300"/></svg>
<div class="t" style="left:295.50px;top:185.50px;font-size:12px;line-height:17px;color:#000;">Why</div>
<div style="position:absolute;left:248.20px;top:212.80px;width:13.00px;height:1.00px;background:#d4d4d4"></div>
<svg style="left:261.00px;top:208.10px" width="9" height="10.4" viewBox="0 0 9 10.4" ><path fill="#8a8a8a" d="M.2.200L8.600 5.200.2 10.200z"/></svg>
<svg style="left:273.00px;top:205.00px" width="16" height="16" viewBox="0 0 16 16" ><path fill="#000" fill-rule="evenodd" d="M2.750 3.300L8.750 1.700V14.500H.3a.7.700 0 0 1 0-1.500h2.450zM6.300 7.400v1.700h.9V7.400z"/><path fill="none" stroke="#000" stroke-width="1.400" stroke-linecap="round" d="M10.200 4h2a1 1 0 0 1 1 1v8.750h2.300"/></svg>
<div class="t" style="left:295.50px;top:205.50px;font-size:12px;line-height:17px;color:#000;">Blog</div>
<div style="position:absolute;left:248.20px;top:232.80px;width:13.00px;height:1.00px;background:#d4d4d4"></div>
<svg style="left:261.00px;top:228.10px" width="9" height="10.4" viewBox="0 0 9 10.4" ><path fill="#8a8a8a" d="M.2.200L8.600 5.200.2 10.200z"/></svg>
<svg style="left:273.00px;top:224.50px" width="16" height="16" viewBox="0 0 16 16" ><path fill="#a8a8a8" d="M0 4h16v9.700H0z"/><path fill="#b4b4b4" d="M0 2.200h7l.7 1.800H0z"/><path fill="#707070" d="M0 4h16v1.200H8.200L7.200 6.800H0z"/></svg>
<div class="t" style="left:295.50px;top:225.50px;font-size:12px;line-height:17px;color:#000;">Storage Folder</div>
<div style="position:absolute;left:248.20px;top:252.80px;width:13.00px;height:1.00px;background:#d4d4d4"></div>
<svg style="left:261.00px;top:248.10px" width="9" height="10.4" viewBox="0 0 9 10.4" ><path fill="#8a8a8a" d="M.2.200L8.600 5.200.2 10.200z"/></svg>
<svg style="left:273.00px;top:244.50px" width="16" height="16" viewBox="0 0 16 16" ><path fill="#a8a8a8" d="M0 4h16v9.700H0z"/><path fill="#b4b4b4" d="M0 2.200h7l.7 1.800H0z"/><path fill="#707070" d="M0 4h16v1.200H8.200L7.200 6.800H0z"/></svg>
<div class="t" style="left:295.50px;top:245.50px;font-size:12px;line-height:17px;color:#000;">Service-Navigation</div>
<div class="red" style="left:246px;top:161px;width:298px;height:23px"></div>
<div class="t" style="right:109.60px;top:50.50px;font-size:12.4px;line-height:18px;color:#000;letter-spacing:.1px;">Path: /Home/</div>
<svg style="left:1816.20px;top:51.90px" width="16" height="16" viewBox="0 0 16 16" ><path fill="#000" fill-rule="evenodd" d="M2.750 3.300L8.750 1.700V14.500H.3a.7.700 0 0 1 0-1.500h2.450zM6.300 7.400v1.700h.9V7.400z"/><path fill="none" stroke="#000" stroke-width="1.400" stroke-linecap="round" d="M10.200 4h2a1 1 0 0 1 1 1v8.750h2.300"/></svg>
<div class="t" style="right:23.40px;top:51.00px;font-size:12.2px;line-height:18px;color:#000;font-weight:bold;">What [3]</div>
<div class="btn" style="left:565.20px;top:77.00px;width:25.60px;height:25.60px;background:#eee;box-shadow:0 1px 0 rgba(0,0,0,.08);border-radius:2px 0 0 2px;"></div>
<div class="btn" style="left:590.40px;top:77.00px;width:25.30px;height:25.60px;background:#eee;box-shadow:0 1px 0 rgba(0,0,0,.08);border-radius:0 2px 2px 0;"></div>
<div class="btn" style="left:621.30px;top:77.00px;width:25.70px;height:25.60px;background:#eee;box-shadow:0 1px 0 rgba(0,0,0,.08);"></div>
<div class="btn" style="left:652.20px;top:77.00px;width:25.70px;height:25.60px;background:#eee;box-shadow:0 1px 0 rgba(0,0,0,.08);"></div>
<svg style="left:570.00px;top:82.00px" width="16" height="16" viewBox="0 0 16 16" ><path fill="none" stroke="#000" stroke-width="1.100" d="M5.500 14.450H2.500v-13h6.900l3.100 3.100V7.500"/><path fill="none" stroke="#000" stroke-width=".9" d="M9.400 1.450v3.100h3.100"/><path fill="#eee" stroke="#000" stroke-width="1" d="M6.300 12.400c1.300-2 3-2.800 4.800-2.800s3.500.8 4.800 2.800c-1.300 2-3 2.800-4.800 2.800s-3.500-.8-4.800-2.800z"/><circle cx="11.100" cy="12.100" r="2.300" fill="#000"/><circle cx="10.300" cy="11.500" r=".6" fill="#ccc"/></svg>
<svg style="left:595.00px;top:82.00px" width="16" height="16" viewBox="0 0 16 16" ><path fill="none" stroke="#000" stroke-width="1.100" d="M6 14.450H2.500v-13h6.900l3.100 3.100V6"/><path fill="none" stroke="#000" stroke-width=".9" d="M9.400 1.450v3.100h3.100"/><path fill="#000" d="M13.800 7.600l2 2-7 6.300-2.100.3.200-2.200z"/><path stroke="#eee" stroke-width=".6" d="M12.900 8.300l2 2"/><path fill="#000" d="M13 14.200h1.300v1.300H13z" opacity=".8"/></svg>
<svg style="left:626.40px;top:82.40px" width="16" height="16" viewBox="0 0 16 16" ><circle cx="6.600" cy="6.400" r="5.100" fill="none" stroke="#000" stroke-width="1.600"/><path stroke="#000" stroke-width="2" stroke-linecap="round" d="M10.500 10.300l3.700 3.500"/></svg>
<svg style="left:657.20px;top:82.00px" width="16" height="16" viewBox="0 0 16 16" ><path fill="none" stroke="#222" stroke-width="1.300" stroke-linecap="round" d="M3.400 2.400c1.800 1.700 5.800 1.700 8.600-.6M2.700 7.400c1.200-.5 2.200-.5 3.300 0M3 9.700l2-1.200"/><path fill="#222" d="M4.400 3.300c2.200.9 5 .6 7-.4L10 5H6z"/><circle cx="10.400" cy="10.600" r="5.400" fill="#5b9a3a"/><path stroke="#fff" stroke-width="1.400" d="M10.400 7.600v6M7.400 10.600h6"/></svg>
<div class="btn" style="left:1809.10px;top:77.00px;width:25.70px;height:25.60px;background:#eee;box-shadow:0 1px 0 rgba(0,0,0,.08);"></div>
<div class="btn" style="left:1840.10px;top:77.00px;width:25.70px;height:25.60px;background:#eee;box-shadow:0 1px 0 rgba(0,0,0,.08);"></div>
<div class="btn" style="left:1871.10px;top:77.00px;width:25.70px;height:25.60px;background:#eee;box-shadow:0 1px 0 rgba(0,0,0,.08);"></div>
<svg style="left:1814.00px;top:82.20px" width="16" height="16" viewBox="0 0 16 16" ><path fill="#000" d="M6.300 .9h4.600L9 5.800h3.500L5 15.200l1.800-6.300H3.500z"/></svg>
<svg style="left:1844.50px;top:81.50px" width="17" height="17" viewBox="0 0 16 16" ><path fill="none" stroke="#000" stroke-width="1" stroke-linejoin="round" d="M8 1l2.200 4.700 5.100.6-3.800 3.500 1 5L8 12.300l-4.500 2.500 1-5L.7 6.300l5.100-.6z"/></svg>
<div class="t" style="left:1880.90px;top:82.50px;font-size:12px;line-height:17px;color:#000;font-weight:bold;">?</div>
<div class="t" style="left:565.00px;top:129.00px;font-size:24.6px;line-height:35px;color:#000;font-family:'Liberation Sans','DejaVu Sans',sans-serif;letter-spacing:.1px;">What</div>
<svg style="left:565.00px;top:186.00px" width="16" height="16" viewBox="0 0 16 16" ><circle cx="8" cy="8" r="7.800" fill="#e97f2d"/><rect x="4.800" y="5.100" width="1.500" height="1.500" rx=".3" fill="#4a3020"/><rect x="9.800" y="5.100" width="1.500" height="1.500" rx=".3" fill="#4a3020"/><rect x="4.700" y="9.500" width="6.700" height="2.100" rx=".3" fill="#b39a84"/></svg>
<div class="t" style="left:585.40px;top:186.50px;font-size:12px;line-height:17px;color:#111;letter-spacing:.18px;">Readability: OK</div>
<svg style="left:702.80px;top:186.00px" width="16" height="16" viewBox="0 0 16 16" ><circle cx="8" cy="8" r="7.800" fill="#e97f2d"/><rect x="4.800" y="5.100" width="1.500" height="1.500" rx=".3" fill="#4a3020"/><rect x="9.800" y="5.100" width="1.500" height="1.500" rx=".3" fill="#4a3020"/><rect x="4.700" y="9.500" width="6.700" height="2.100" rx=".3" fill="#b39a84"/></svg>
<div class="t" style="left:723.80px;top:186.50px;font-size:12px;line-height:17px;color:#111;letter-spacing:.4px;">SEO: OK</div>
<div style="position:absolute;left:565.00px;top:219.00px;width:1331.80px;height:37.80px;background:#ededed"></div>
<div class="t" style="left:575.00px;top:229.50px;font-size:12px;line-height:17px;color:#111;letter-spacing:.2px;">Yoast SEO</div>
<svg style="left:1796.00px;top:231.50px" width="12" height="12" viewBox="0 0 16 16" ><path fill="#a4286a" d="M8 .8l2.200 4.800 5.200.6-3.900 3.500 1.100 5.100L8 12.200l-4.600 2.600 1.100-5.100L.6 6.200l5.200-.6z"/></svg>
<div class="t" style="right:33.20px;top:229.50px;font-size:12px;line-height:17px;color:#111;text-decoration:underline;">Go Premium</div>
<div class="t" style="left:575.50px;top:267.50px;font-size:12px;line-height:17px;color:#555;font-weight:bold;letter-spacing:-.1px;">Preview as:</div>
<div style="position:absolute;left:576.70px;top:293.50px;width:10.00px;height:4.00px;background:#1a73e8;border-radius:5px 5px 0 0"></div>
<div style="position:absolute;left:691.00px;top:293.50px;width:10.00px;height:4.00px;background:#777;border-radius:5px 5px 0 0"></div>
<div class="red" style="left:551px;top:295px;width:1352px;height:694px;background:#fff"></div>
<div class="t" style="left:561.20px;top:301.00px;font-size:24.6px;line-height:35px;color:#000;font-family:'Liberation Sans','DejaVu Sans',sans-serif;letter-spacing:.15px;">Edit Page &quot;What&quot;</div>
<svg style="left:560.20px;top:358.20px" width="16" height="16" viewBox="0 0 16 16" ><circle cx="8" cy="8" r="7.800" fill="#e97f2d"/><rect x="4.800" y="5.100" width="1.500" height="1.500" rx=".3" fill="#4a3020"/><rect x="9.800" y="5.100" width="1.500" height="1.500" rx=".3" fill="#4a3020"/><rect x="4.700" y="9.500" width="6.700" height="2.100" rx=".3" fill="#b39a84"/></svg>
<div class="t" style="left:580.60px;top:358.50px;font-size:12px;line-height:17px;color:#111;letter-spacing:.18px;">Readability: OK</div>
<svg style="left:694.00px;top:358.20px" width="16" height="16" viewBox="0 0 16 16" ><circle cx="8" cy="8" r="7.800" fill="#e97f2d"/><rect x="4.800" y="5.100" width="1.500" height="1.500" rx=".3" fill="#4a3020"/><rect x="9.800" y="5.100" width="1.500" height="1.500" rx=".3" fill="#4a3020"/><rect x="4.700" y="9.500" width="6.700" height="2.100" rx=".3" fill="#b39a84"/></svg>
<div class="t" style="left:714.70px;top:358.50px;font-size:12px;line-height:17px;color:#111;letter-spacing:.4px;">SEO: OK</div>
<div style="position:absolute;left:560.00px;top:391.00px;width:1331.70px;height:31.50px;background:#ededed;border-radius:2px 2px 0 0"></div>
<div style="position:absolute;left:560.00px;top:422.00px;width:1331.70px;height:526.70px;background:#fafafa;border:1px solid #cdcdcd"></div>
<div style="position:absolute;left:975.00px;top:391.00px;width:87.00px;height:32.00px;background:#fafafa;border:1px solid #cdcdcd;border-bottom:none"></div>
<div class="t" style="left:573.50px;top:398.50px;font-size:12px;line-height:17px;color:#333;">General</div>
<div class="t" style="left:648.00px;top:398.50px;font-size:12px;line-height:17px;color:#333;">SEO</div>
<div class="t" style="left:701.50px;top:398.50px;font-size:12px;line-height:17px;color:#333;">Social media</div>
<div class="t" style="left:806.00px;top:398.50px;font-size:12px;line-height:17px;color:#333;">Metadata</div>
<div class="t" style="left:889.50px;top:398.50px;font-size:12px;line-height:17px;color:#333;">Appearance</div>
<div class="t" style="left:988.50px;top:398.50px;font-size:12px;line-height:17px;color:#000;">Behaviour</div>
<div class="t" style="left:1077.00px;top:398.50px;font-size:12px;line-height:17px;color:#333;">Resources</div>
<div class="t" style="left:1166.00px;top:398.50px;font-size:12px;line-height:17px;color:#333;">Language</div>
<div class="t" style="left:1252.50px;top:398.50px;font-size:12px;line-height:17px;color:#333;">Access</div>
<div class="t" style="left:1321.00px;top:398.50px;font-size:12px;line-height:17px;color:#333;">Categories</div>
<div class="t" style="left:1413.00px;top:398.50px;font-size:12px;line-height:17px;color:#333;">Notes</div>
<div class="red" style="left:973px;top:391px;width:94px;height:34px"></div>
<div class="t" style="left:573.00px;top:436.50px;font-size:15px;line-height:21px;color:#000;">Links to this Page</div>
<div class="t" style="left:573.00px;top:464.50px;font-size:12px;line-height:17px;color:#000;font-weight:bold;">Link Target</div>
<div class="inp" style="left:573px;top:496px;width:678.500px;height:31.500px"></div>
<div class="inp" style="left:1257.30px;top:496.00px;width:119.50px;height:31.50px"></div>
<svg style="left:1362.30px;top:509.20px" width="9.5" height="6" viewBox="0 0 9 6" ><path fill="none" stroke="#222" stroke-width="1.800" d="M1 1.200l3.500 3.500L8 1.200"/></svg>
<div class="sep" style="top:554.800px"></div>
<div class="t" style="left:573.00px;top:569.50px;font-size:15px;line-height:21px;color:#000;">Caching</div>
<div class="t" style="left:573.00px;top:597.50px;font-size:12px;line-height:17px;color:#000;font-weight:bold;">Cache Lifetime</div>
<div class="t" style="left:1241.00px;top:597.50px;font-size:12px;line-height:17px;color:#000;font-weight:bold;">Cache Tags</div>
<div class="inp" style="left:573.00px;top:629.30px;width:119.80px;height:31.50px"></div>
<svg style="left:678.30px;top:642.50px" width="9.5" height="6" viewBox="0 0 9 6" ><path fill="none" stroke="#222" stroke-width="1.800" d="M1 1.200l3.500 3.500L8 1.200"/></svg>
<div class="t" style="left:584.00px;top:637.50px;font-size:12px;line-height:17px;color:#333;">Default</div>
<div class="inp" style="left:1241px;top:629.300px;width:479.500px;height:31.500px"></div>
<div class="sep" style="top:687.800px"></div>
<div class="t" style="left:573.00px;top:702.50px;font-size:15px;line-height:21px;color:#000;">Miscellaneous</div>
<div class="t" style="left:573.00px;top:730.50px;font-size:12px;line-height:17px;color:#000;font-weight:bold;">Use as Root Page</div>
<div class="t" style="left:907.00px;top:730.50px;font-size:12px;line-height:17px;color:#000;font-weight:bold;">Include in Search</div>
<div class="t" style="left:1241.00px;top:730.50px;font-size:12px;line-height:17px;color:#000;font-weight:bold;letter-spacing:-.09px;">Hide child pages in page tree</div>
<div class="t" style="left:1575.00px;top:730.50px;font-size:12px;line-height:17px;color:#000;font-weight:bold;">Exclude from Sitemap</div>
<div style="position:absolute;left:573.00px;top:762.200px;width:36px;height:19.800px;border-radius:10px;background:#f0f0f0;border:1px solid #c2c2c2"></div>
<div style="position:absolute;left:576.60px;top:765px;width:14.200px;height:14.200px;border-radius:8px;background:#fff;border:1px solid #222"></div>
<div style="position:absolute;left:907.00px;top:762.200px;width:36px;height:19.800px;border-radius:10px;background:#79a548;border:1px solid #5f8a35"></div>
<div style="position:absolute;left:925.60px;top:765px;width:14.200px;height:14.200px;border-radius:8px;background:#fff;border:1px solid #222"></div>
<div style="position:absolute;left:1241.00px;top:762.200px;width:36px;height:19.800px;border-radius:10px;background:#f0f0f0;border:1px solid #c2c2c2"></div>
<div style="position:absolute;left:1244.60px;top:765px;width:14.200px;height:14.200px;border-radius:8px;background:#fff;border:1px solid #222"></div>
<div style="position:absolute;left:1575.00px;top:763.20px;width:24.20px;height:23.50px;background:#dedede;border:1px solid #b5b5b5;border-radius:2px"></div>
<div class="t" style="left:1605.40px;top:766.50px;font-size:12px;line-height:17px;color:#111;">Enabled</div>
<div class="sep" style="top:814.800px"></div>
<div class="t" style="left:573.00px;top:829.50px;font-size:15px;line-height:21px;color:#000;">Use as Container</div>
<div class="t" style="left:573.00px;top:857.50px;font-size:12px;line-height:17px;color:#000;font-weight:bold;">Contains Plugin</div>
<div class="inp" style="left:573px;top:889.300px;width:151.600px;height:31.500px"></div>
<div style="position:absolute;left:573.00px;top:889.30px;width:32.70px;height:31.50px;background:#f3f3f3;border:1px solid #bbb;border-radius:2px 0 0 2px"></div>
<svg style="left:710.10px;top:902.50px" width="9.5" height="6" viewBox="0 0 9 6" ><path fill="none" stroke="#222" stroke-width="1.800" d="M1 1.200l3.500 3.500L8 1.200"/></svg>
<svg style="left:1816.00px;top:955.50px" width="16" height="16" viewBox="0 0 16 16" ><path fill="#111" fill-rule="evenodd" d="M2.750 3.300L8.750 1.700V14.500H.3a.7.700 0 0 1 0-1.500h2.450zM6.300 7.400v1.700h.9V7.400z"/><path fill="none" stroke="#111" stroke-width="1.400" stroke-linecap="round" d="M10.200 4h2a1 1 0 0 1 1 1v8.750h2.300"/></svg>
<div class="t" style="right:29.00px;top:954.50px;font-size:12px;line-height:17px;color:#555;"><b style="color:#333">Page</b> [3]</div>
<div class="red" style="left:837px;top:679px;width:326px;height:154px"></div>
</div>
</body>
</html>
